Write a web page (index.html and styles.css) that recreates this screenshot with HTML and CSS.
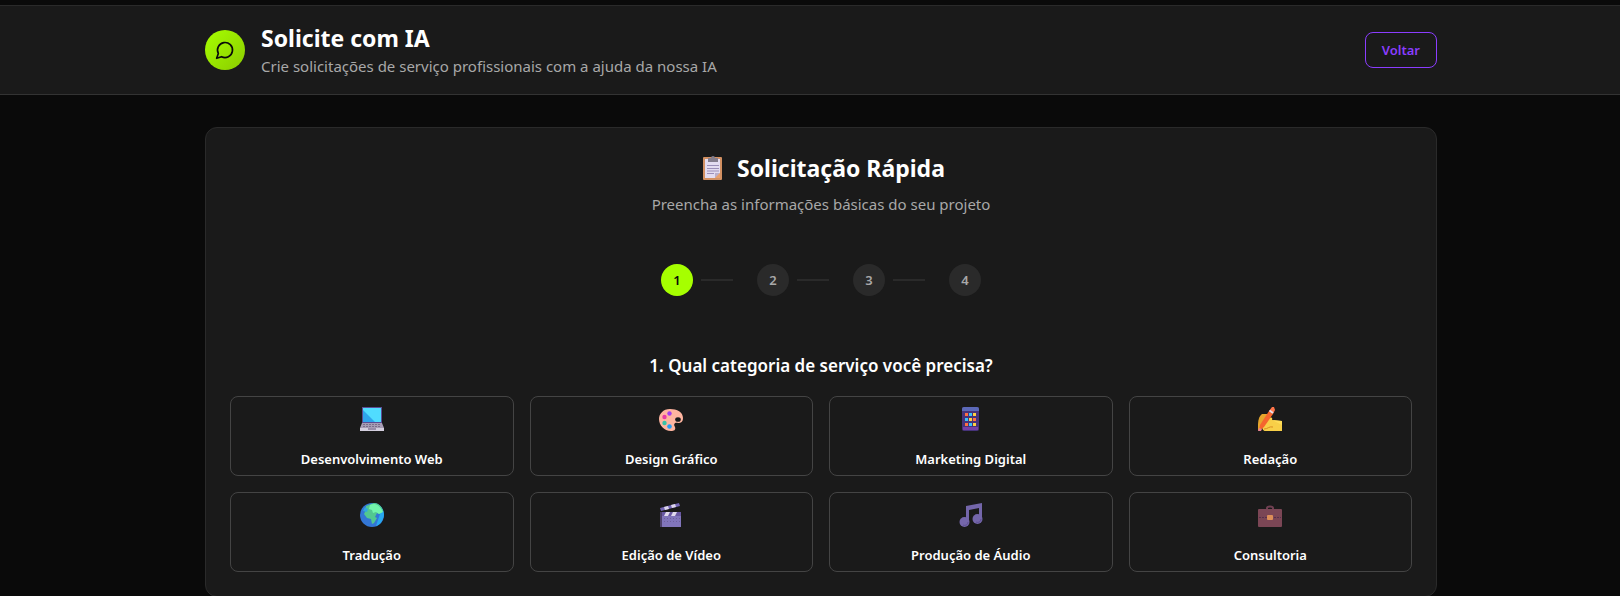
FILE: index.html
```html
<!DOCTYPE html>
<html lang="pt-BR">
<head>
    <meta charset="UTF-8">
    <meta name="viewport" content="width=device-width, initial-scale=1.0">
    <title>Solicite com IA</title>
    <link rel="stylesheet" href="styles.css">
</head>
<body>
    <header class="header">
        <div class="container header-content">
            <div class="brand">
                <div class="brand-icon">
                    <svg width="20" height="20" viewBox="0 0 24 24" fill="none" stroke="#0a0a0a" stroke-width="2" stroke-linecap="round" stroke-linejoin="round">
                        <path d="M7.9 20A9 9 0 1 0 4 16.1L2 22Z"/>
                    </svg>
                </div>
                <div>
                    <h1>Solicite com IA</h1>
                    <p class="subtitle">Crie solicitações de serviço profissionais com a ajuda da nossa IA</p>
                </div>
            </div>
            <button type="button" class="back-btn">Voltar</button>
        </div>
    </header>

    <main>
        <section class="container card">
            <h2>
                <svg width="32" height="24" viewBox="0 0 24 24">
                    <rect x="2" y="1" width="19" height="23" rx="1" fill="#d29062"/>
                    <path d="M4 3h15v14l-5 5H4z" fill="#e3dcf0"/>
                    <path d="M14 22v-5h5z" fill="#b9aecb"/>
                    <path d="M14 22l5-5v5z" fill="#e8a06c"/>
                    <path d="M7 2h3a2 2 0 0 1 4 0h3v4H7z" fill="#837d8c"/>
                    <path d="M6 9.500h12M6 12.500h12M6 15h12M6 17.500h7" stroke="#9b8fb8"/>
                </svg>
                Solicitação Rápida
            </h2>
            <p class="subtitle">Preencha as informações básicas do seu projeto</p>

            <ol class="steps">
                <li><span class="step active">1</span><span class="line"></span></li>
                <li><span class="step">2</span><span class="line"></span></li>
                <li><span class="step">3</span><span class="line"></span></li>
                <li><span class="step">4</span></li>
            </ol>

            <h3>1. Qual categoria de serviço você precisa?</h3>
            <div class="options">
                <button type="button" class="option">
                    <svg width="24" height="24" viewBox="0 0 24 24">
                        <path d="M2 0h20v16H2z" fill="#5b4c94"/>
                        <path d="M3 1h18v14H3z" fill="#50dcff"/>
                        <path d="M3 3l12 12H3z" fill="#2ea5ec"/>
                        <path d="M2 16h20l2 5H0z" fill="#a79db5"/>
                        <path d="M3 17.500h18M3 19.500h18" stroke="#796f8c" stroke-dasharray="2 1"/>
                        <path d="M0 21h24v3H0z" fill="#d3cede"/>
                        <path d="M8 21h8v2H8z" fill="#998ea9"/>
                    </svg>
                    Desenvolvimento Web
                </button>
                <button type="button" class="option">
                    <svg width="24" height="24" viewBox="0 0 24 24">
                        <path d="M11 2C4 2 0 7 0 12c0 6 5 12 12 12 3 0 5-1 4-4-2-3 0-5 3-4 3 0 5-1 5-5 0-6-6-9-13-9z" fill="#ffb5a0"/>
                        <ellipse cx="19" cy="12.500" rx="2.800" ry="2.300" fill="#1a1a1a"/>
                        <circle cx="10.500" cy="6.500" r="2.200" fill="#a33ff0"/>
                        <circle cx="5.500" cy="10" r="2.200" fill="#e83ca5"/>
                        <circle cx="5.500" cy="16" r="2.200" fill="#38c3a8"/>
                        <circle cx="10.500" cy="19.500" r="2.300" fill="#259df2"/>
                    </svg>
                    Design Gráfico
                </button>
                <button type="button" class="option">
                    <svg width="24" height="24" viewBox="0 0 24 24">
                        <rect x="3" y="0" width="17" height="24" rx="2" fill="#46337a"/>
                        <path d="M5 0h13a2 2 0 0 1 2 2v2H3V2a2 2 0 0 1 2-2z" fill="#5c69b8"/>
                        <path d="M4 20h15v3H4z" fill="#753fa6"/>
                        <path d="M6 6h3v3H6zM14 11h3v3h-3zM6 16h3v3H6z" fill="#ff7043"/>
                        <path d="M10 6h3v3h-3zM6 11h3v3H6zM10 16h3v3h-3z" fill="#39c2ff"/>
                        <path d="M14 6h3v3h-3zM10 11h3v3h-3zM14 16h3v3h-3z" fill="#ffcf40"/>
                    </svg>
                    Marketing Digital
                </button>
                <button type="button" class="option">
                    <svg width="24" height="24" viewBox="0 0 24 24">
                        <path d="M0 24v-6c0-4 1-9 4-11h5l1 3-4 7z" fill="#e6a52c"/>
                        <path d="M4 19l7-8c2-1 4 0 3 2l10 1v10H10c-4 1-6-1-6-5z" fill="#f8cf48"/>
                        <path d="M14 13l10 1v4z" fill="#ffdc57"/>
                        <path d="M6 22c4 0 5-3 9-2" fill="none" stroke="#d98c22"/>
                        <path d="M11 4l4 3L6 20l-5 4 1-6z" fill="#f5652e"/>
                        <path d="M11 4l3-4h2l1 3-2 4z" fill="#ff754a"/>
                        <path d="M11.500 3.500l3.500 2.500" stroke="#e5e0ee" stroke-width="2"/>
                        <path d="M0 24l1-3 3 1-1 2z" fill="#e88295"/>
                    </svg>
                    Redação
                </button>
                <button type="button" class="option">
                    <svg width="24" height="24" viewBox="0 0 24 24">
                        <circle cx="12" cy="12" r="12" fill="#3376d5"/>
                        <path d="M13 0c7 0 11 6 11 12-1 6-4 10-8 11l4-12z" fill="#28a8f0"/>
                        <path d="M6 3l8-3c5 0 8 4 9 8l-4 3-2-1-2 4 2 1-3 5-2 1-1-5-4-1-3-4 2-4z" fill="#52c890"/>
                        <path d="M10 2c6-3 11 2 13 7l-4 2-3-2-3 1-1-3-3-1z" fill="#72f4ac"/>
                        <path d="M3 8l2-4 3 2-1 3z" fill="#30a8de"/>
                    </svg>
                    Tradução
                </button>
                <button type="button" class="option">
                    <svg width="24" height="24" viewBox="0 0 24 24">
                        <path d="M1 5l19-5 1 3L2 8z" fill="#7567b5"/>
                        <path d="M5 4l4-1 1 3-4 1zM12 2l4-1 1 3-4 1z" fill="#ded7ed"/>
                        <path d="M1 9h21v15H1z" fill="#8175bb"/>
                        <path d="M1 9h2v15H1z" fill="#4e416a"/>
                        <path d="M3 9h19v4H3z" fill="#6958a2"/>
                        <path d="M7 9h4l-2 4H5zM14 9h4l-2 4h-4z" fill="#e0d9ed"/>
                        <path d="M5 15.500h16M5 18.500h16" stroke="#6d609b" stroke-dasharray="1 2"/>
                    </svg>
                    Edição de Vídeo
                </button>
                <button type="button" class="option">
                    <svg width="24" height="24" viewBox="0 0 24 24">
                        <path d="M7 3l16-3v17h-3V5L10 7v13H7z" fill="#7466aa"/>
                        <circle cx="5.500" cy="19" r="5" fill="#7466aa"/>
                        <circle cx="18.500" cy="16" r="5" fill="#7466aa"/>
                        <path d="M4 22c2 1 5 0 5-3M17 19c2 1 5 0 5-3" fill="none" stroke="#5d4e93"/>
                    </svg>
                    Produção de Áudio
                </button>
                <button type="button" class="option">
                    <svg width="24" height="24" viewBox="0 0 24 24">
                        <path d="M9 7V5c0-2 6-2 6 0v2" fill="none" stroke="#704052" stroke-width="2"/>
                        <rect x="0" y="6" width="24" height="18" rx="1" fill="#7b4655"/>
                        <path d="M1 14.500h22" stroke="#55304c" stroke-dasharray="2 1"/>
                        <rect x="9" y="12" width="6" height="5" rx="1" fill="#dc8e58"/>
                    </svg>
                    Consultoria
                </button>
            </div>
        </section>
    </main>
</body>
</html>
```
FILE: styles.css
```css
* {
    box-sizing: border-box;
    margin: 0;
    padding: 0;
}
body {
    font-family: "Segoe UI", "Noto Sans", sans-serif;
    font-size: 15px;
    line-height: 24px;
    background-color: #0a0a0a;
    color: #fff;
    padding-top: 5px;
}
button {
    font-family: inherit;
    font-size: 13px;
    font-weight: 600;
    line-height: 20px;
    background: none;
    border-radius: 8px;
    cursor: pointer;
}
.container {
    max-width: 1232px;
    margin: 0 auto;
}
.header {
    background-color: #1a1a1a;
    border-top: 1px solid #2a2a2a;
    border-bottom: 1px solid #333;
    padding: 16px 24px 16px 46px;
}
.header-content,
.brand {
    display: flex;
    align-items: center;
    gap: 16px;
}
.header-content {
    justify-content: space-between;
}
.brand-icon {
    display: flex;
    align-items: center;
    justify-content: center;
    flex-shrink: 0;
    width: 40px;
    height: 40px;
    border-radius: 50%;
    background: linear-gradient(135deg, #a6ff00, #8bcc00);
}
h1,
h2 {
    font-size: 23px;
    font-weight: 700;
    line-height: 32px;
}
.subtitle {
    color: #a8a8a8;
}
.back-btn {
    color: #8b3dff;
    border: 1px solid #8b3dff;
    padding: 7px 16px;
}
main {
    padding: 32px 24px 0 46px;
}
.card {
    padding: 24px;
    background-color: #1a1a1a;
    border: 1px solid #2a2a2a;
    border-radius: 12px;
    text-align: center;
}
h2 {
    display: flex;
    align-items: center;
    justify-content: center;
    gap: 8px;
    margin-bottom: 8px;
}
.steps {
    display: flex;
    justify-content: center;
    gap: 24px;
    margin: 48px 0 56px;
    list-style: none;
}
.steps li {
    display: flex;
    align-items: center;
    gap: 8px;
}
.step {
    width: 32px;
    height: 32px;
    border-radius: 50%;
    background-color: #2a2a2a;
    color: #a8a8a8;
    font-size: 13px;
    font-weight: 600;
    line-height: 32px;
}
.step.active {
    background-color: #a6ff00;
    color: #0a0a0a;
}
.line {
    width: 32px;
    height: 2px;
    background-color: #2a2a2a;
}
h3 {
    font-size: 17px;
    font-weight: 600;
    line-height: 28px;
    margin-bottom: 16px;
}
.options {
    display: grid;
    grid-template-columns: repeat(4, 1fr);
    gap: 16px;
}
.option {
    display: flex;
    flex-direction: column;
    align-items: center;
    gap: 18px;
    padding: 10px 16px 6px;
    color: #fff;
    border: 1px solid #444;
}
@media (max-width: 800px) {
    .options {
        grid-template-columns: repeat(2, 1fr);
    }
}
```
